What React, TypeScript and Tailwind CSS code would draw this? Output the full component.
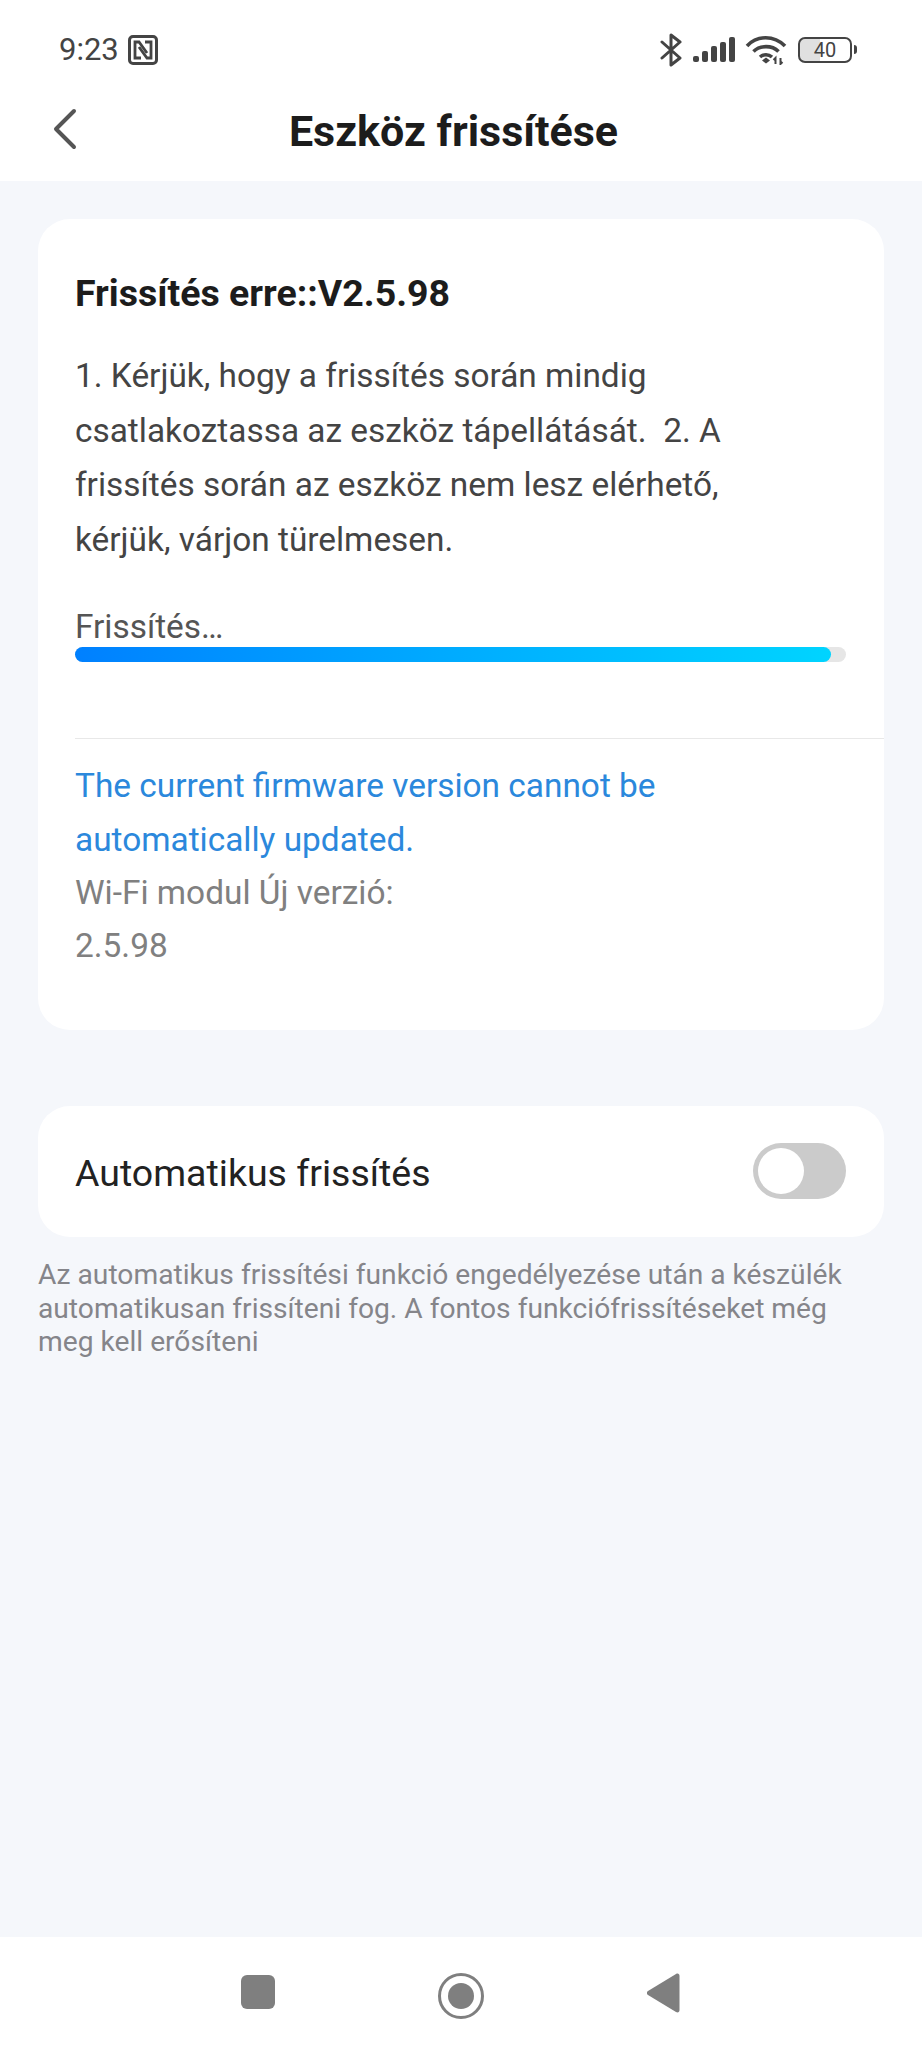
// Firmware update screen
const font = { fontFamily: '"Roboto", "Noto Sans", sans-serif' };

function NfcIcon() {
  return (
    <svg width="30" height="30" viewBox="0 0 30 30" fill="none" stroke="#444" strokeWidth="2.8" className="ml-[9px]">
      <rect x="1.5" y="1.5" width="27" height="27" rx="3.5" strokeWidth="3" />
      <path d="M13 23H7V7h4l8 11" />
      <path d="M17 7h6v16h-4l-8-11" />
    </svg>
  );
}

function StatusIcons() {
  return (
    <div className="flex items-center">
      <svg width="22" height="34" viewBox="0 0 22 34" fill="none" stroke="#444" strokeWidth="3" strokeLinecap="round" strokeLinejoin="round">
        <path d="M2 9l18 16-9 7V2l9 7L2 25" />
      </svg>
      <svg width="42" height="26" viewBox="0 0 42 26" fill="#444" className="ml-[11px] mt-[1px]">
        <rect x="0" y="19" width="6" height="6" rx="2" />
        <rect x="9" y="14" width="6" height="11" rx="2" />
        <rect x="18" y="9" width="6" height="16" rx="2" />
        <rect x="27" y="5" width="6" height="20" rx="2" />
        <rect x="36" y="0" width="6" height="25" rx="2" />
      </svg>
      <svg width="42" height="30" viewBox="0 0 42 30" fill="none" stroke="#444" strokeWidth="3.6" className="ml-[10px]">
        <path d="M2 11C12 0 29 0 40 11" />
        <path d="M8.5 16.5C15 10 27 10 33.5 16.5" />
        <path d="M15 22c3.500-3 8.500-3 12 0" />
        <path d="M17 25.500l4-3 4 3-4 3z" fill="#444" stroke="none" />
        <path d="M30.500 29v-6l-2 2M35.500 23v6l2-2" strokeWidth="2" />
      </svg>
      <div className="relative ml-[11px] flex h-[26px] w-[54px] items-center justify-center rounded-[7px] border-[2.5px] border-[#444] bg-[linear-gradient(90deg,#e0e0e0_0,#e0e0e0_40%,#fff_40%)]">
        <span className="text-[20px] leading-none text-[#444]">40</span>
      </div>
      <div className="ml-[2px] h-[9px] w-[3px] rounded-r-sm bg-[#444]" />
    </div>
  );
}

export default function App() {
  return (
    <div className="flex min-h-[2048px] flex-col bg-[#f5f7fb]" style={font}>
      <div className="bg-white">
        <div className="flex h-[78px] items-center justify-between pl-[59px] pr-[65px] pt-[21px]">
          <div className="flex items-center">
            <span className="text-[31px] leading-none text-[#444]">9:23</span>
            <NfcIcon />
          </div>
          <StatusIcons />
        </div>
        <div className="relative flex h-[103px] items-start justify-center pr-[15px] pt-[25px]">
          <svg width="26" height="42" viewBox="0 0 26 42" fill="none" stroke="#555" strokeWidth="4" strokeLinecap="round" strokeLinejoin="round" className="absolute left-[52px] top-[30px]">
            <path d="M22 3L4 21l18 18" />
          </svg>
          <h1 className="text-[43px] font-bold leading-[56px] text-[#1c1c1c]">Eszköz frissítése</h1>
        </div>
      </div>

      <div className="mx-[38px] mt-[38px] rounded-[32px] bg-white pb-[58px] pl-[37px] pt-[50px]">
        <h2 className="text-[37.5px] font-bold leading-[48px] text-[#1c1c1c]">Frissítés erre::V2.5.98</h2>
        <p className="mt-[32px] whitespace-pre text-[33.4px] leading-[54.500px] text-[#444]">
          {'1. Kérjük, hogy a frissítés során mindig\ncsatlakoztassa az eszköz tápellátását.  2. A\nfrissítés során az eszköz nem lesz elérhető,\nkérjük, várjon türelmesen.'}
        </p>
        <div className="mt-[40px] text-[33.4px] leading-[40px] text-[#555]">Frissítés…</div>
        <div className="mr-[38px] h-[15px] rounded-full bg-[#e6e6e6]">
          <div className="h-full w-[98%] rounded-full bg-gradient-to-r from-[#0080ff] to-[#00d4ff]" />
        </div>
        <div className="mt-[76px] h-px bg-[#e8e8e8]" />
        <div className="mt-[20px] text-[33.4px] leading-[53.500px] text-[#2b88dc]">
          The current firmware version cannot be
          <br />
          automatically updated.
        </div>
        <div className="text-[33.4px] leading-[53px] text-[#808080]">
          Wi-Fi modul Új verzió:
          <br />
          2.5.98
        </div>
      </div>

      <div className="mx-[38px] mt-[76px] flex h-[131px] items-center justify-between rounded-[32px] bg-white pl-[37px] pr-[38px]">
        <span className="mt-[3px] text-[37.5px] text-[#222]">Automatikus frissítés</span>
        <div className="mb-[2px] flex h-[56px] w-[93px] items-center rounded-full bg-[#cbcbcb] pl-[5px]">
          <div className="h-[46px] w-[46px] rounded-full bg-white" />
        </div>
      </div>

      <p className="mx-[38px] mt-[21px] text-[28.2px] leading-[33.500px] text-[#85858a]">
        Az automatikus frissítési funkció engedélyezése után a készülék
        <br />
        automatikusan frissíteni fog. A fontos funkciófrissítéseket még
        <br />
        meg kell erősíteni
      </p>

      <div className="flex-1" />

      <div className="flex h-[111px] items-start bg-white pl-[241px] pt-[36px]">
        <div className="mt-[2px] h-[34px] w-[34px] rounded-[6px] bg-[#7f7f7f]" />
        <div className="ml-[163px] flex h-[46px] w-[46px] items-center justify-center rounded-full border-[3.500px] border-[#7f7f7f]">
          <div className="h-[26px] w-[26px] rounded-full bg-[#7f7f7f]" />
        </div>
        <svg width="33" height="40" viewBox="0 0 33 40" fill="#7f7f7f" className="ml-[163px]">
          <path d="M1 18L29 1c2-1 3.500 0 3.500 2v34c0 2-1.500 3-3.500 2L1 22c-1.500-1-1.500-3 0-4z" />
        </svg>
      </div>
    </div>
  );
}
